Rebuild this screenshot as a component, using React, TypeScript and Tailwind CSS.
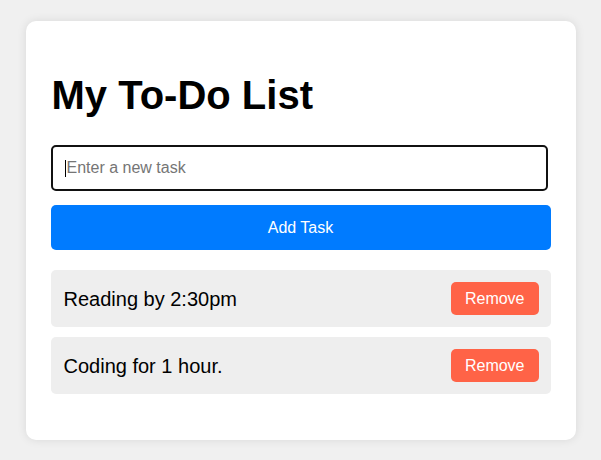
import { useState } from "react";

export default function App() {
  const [tasks, setTasks] = useState(["Reading by 2:30pm", "Coding for 1 hour."]);
  const [text, setText] = useState("");

  const addTask = () => {
    if (!text.trim()) return;
    setTasks([...tasks, text.trim()]);
    setText("");
  };

  return (
    <div className="min-h-[460px] bg-[#f0f0f0] pt-[21px] font-['Liberation_Sans',Arial,sans-serif]">
      <div className="mx-auto w-[550px] rounded-[10px] bg-white px-[25px] pt-[25px] pb-[46px] shadow-[0_0_10px_rgba(0,0,0,0.1)]">
        <h1 className="mt-[26px] mb-[27px] pl-px text-[40px] font-bold leading-[46px] text-black">My To-Do List</h1>
        <div className="relative w-[497px]">
          <input
            value={text}
            onChange={(e) => setText(e.target.value)}
            placeholder="Enter a new task"
            className="block h-[46px] w-full rounded-[5px] border-2 border-[#111] pl-[14px] pr-[12px] text-[16px] text-black outline-none placeholder:text-[#757575]"
          />
          {/* caret, the field is focused in the reference */}
          {text === "" && <span className="pointer-events-none absolute left-[14px] top-[15px] h-[17px] w-px bg-black" />}
        </div>
        <button
          onClick={addTask}
          className="mt-[14px] block h-[45px] w-full rounded-[5px] bg-[#007bff] text-[16px] text-white"
        >
          Add Task
        </button>
        <ul className="mt-[20px] flex flex-col gap-[10px]">
          {tasks.map((t, i) => (
            <li key={i} className="flex items-center justify-between rounded-[5px] bg-[#eeeeee] py-[12px] pl-[13px] pr-[12px]">
              <span className="text-[20px] text-black">{t}</span>
              <button
                onClick={() => setTasks(tasks.filter((_, j) => j !== i))}
                className="h-[33px] rounded-[5px] bg-[#ff6347] px-[14px] text-[16px] text-white"
              >
                Remove
              </button>
            </li>
          ))}
        </ul>
      </div>
    </div>
  );
}
